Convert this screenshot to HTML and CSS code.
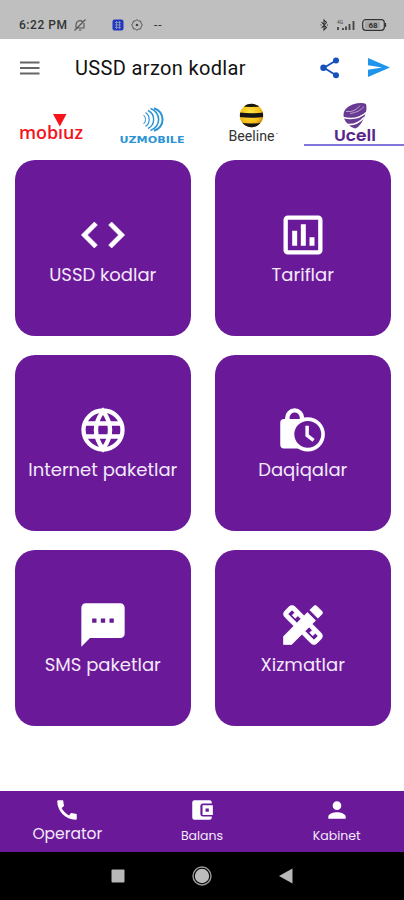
FILE: index.html
```
<!DOCTYPE html>
<html lang="uz">
<head>
    <meta charset="UTF-8">
    <meta name="viewport" content="width=device-width, initial-scale=1.0">
    <title>USSD arzon kodlar</title>
    <link rel="stylesheet" href="styles.css">
</head>
<body>
    <div class="status-bar">
        <span class="time">6:22 PM</span>
        <svg class="muted" width="14" height="14" viewBox="0 0 14 14">
            <path d="M3 10V6.500a4 4 0 0 1 6.500-3M11 5v5H4.500M6 12h2.500M1.500 12.500l11-11" fill="none" stroke="#555" stroke-width="1.100"/>
        </svg>
        <svg class="app-dot" width="12" height="12" viewBox="0 0 12 12">
            <rect x="0.500" y="0.500" width="11" height="11" rx="2" fill="#2038c0"/>
            <path d="M3 3.500h6M3 6h6M3 8.500h6M4.500 2v8M7.500 2v8" stroke="#8b93b8" stroke-width="0.900"/>
        </svg>
        <svg class="gear" width="12" height="12" viewBox="0 0 12 12">
            <path d="M6 .7l1.600 1.200 2 .2.500 2L11.300 6l-1.200 1.900-.5 2-2 .2L6 11.300l-1.600-1.200-2-.2-.5-2L.7 6l1.200-1.900.5-2 2-.2z" fill="none" stroke="#555"/>
            <circle cx="6" cy="6" r="1.300" fill="#444"/>
        </svg>
        <span class="more-dots">--</span>
        <svg class="status-right" width="69" height="14" viewBox="0 0 69 14">
            <path d="M1.500 4l5 5.500L4 12V2l2.500 2.500-5 5.500M.5 7h1M7 7h1" fill="none" stroke="#333" stroke-width="1.100"/>
            <text x="17" y="5.500" font-size="5" fill="#444">4G</text>
            <path d="M18 12V9M23 12v-2M26 12V8.500M29.500 12V6M33.500 12V3" stroke="#444" stroke-width="1.800"/>
            <rect x="42.700" y="1.700" width="21.600" height="10.600" rx="3" fill="none" stroke="#333" stroke-width="1.200"/>
            <path d="M65.500 5v4" stroke="#333" stroke-width="1.200"/>
            <rect x="45" y="3.500" width="15" height="7" rx="1" fill="#a5a5a5"/>
            <text x="48.500" y="10" font-size="8" font-weight="bold" fill="#333">68</text>
        </svg>
    </div>

    <header>
        <svg class="menu-icon" width="20" height="14" viewBox="0 0 20 14">
            <path d="M0 1.500h19.500M0 7h19.500M0 12.500h19.500" stroke="#666" stroke-width="1.800"/>
        </svg>
        <h1>USSD arzon kodlar</h1>
        <svg class="share-icon" width="20" height="22" viewBox="0 0 20 22">
            <path d="M16 3.500L4 10.700l12 7.500" fill="none" stroke="#1550bd" stroke-width="1.800"/>
            <circle cx="16" cy="3.500" r="3" fill="#1550bd"/>
            <circle cx="3.500" cy="10.700" r="3.200" fill="#1550bd"/>
            <circle cx="16" cy="18.200" r="3" fill="#1550bd"/>
        </svg>
        <svg class="send-icon" width="22" height="19" viewBox="0 0 22 19">
            <path d="M0 0l22 9.500L0 19v-7.300l14-2.200L0 7.300z" fill="#1e94ea"/>
        </svg>
    </header>

    <nav class="operators">
        <a class="tab">
            <svg width="100" height="47" viewBox="0 0 100 47">
                <path d="M53 14h13.500l-6.700 12.500z" fill="#f5141c"/>
                <text class="logo-mobiuz" x="19" y="39" textLength="64" lengthAdjust="spacingAndGlyphs">mobıuz</text>
            </svg>
        </a>
        <a class="tab">
            <svg width="100" height="47" viewBox="0 0 100 47">
                <g fill="none" stroke="#2b94d3">
                    <path d="M53 8.300a11.600 11.600 0 0 1 0 22.400" stroke-width="2"/>
                    <path d="M49.500 8.500a11.500 11.500 0 0 1 0 22" stroke-width="1.600"/>
                    <path d="M47 10.500a10 10 0 0 1 0 18" stroke-width="1.400"/>
                    <path d="M44.500 12.500a8.500 8.500 0 0 1 0 14" stroke-width="1.200"/>
                    <path d="M42.500 15a6 6 0 0 1 0 9" stroke-width="1"/>
                </g>
                <text class="logo-uzmobile" x="18.500" y="43" textLength="65" lengthAdjust="spacingAndGlyphs">UZMOBILE</text>
            </svg>
        </a>
        <a class="tab">
            <svg width="100" height="47" viewBox="0 0 100 47">
                <defs>
                    <radialGradient id="bee" cx="45%" cy="40%" r="60%">
                        <stop offset="0" stop-color="#ffe74a"/>
                        <stop offset="0.700" stop-color="#f8bd16"/>
                        <stop offset="1" stop-color="#b97b08"/>
                    </radialGradient>
                    <clipPath id="ball"><circle cx="50" cy="15.500" r="11.700"/></clipPath>
                </defs>
                <g transform="translate(-1.500)" clip-path="url(#ball)">
                    <rect x="38" y="3" width="24" height="25" fill="url(#bee)"/>
                    <path d="M38 3h24v3q-12 2-24 0zM38 12.500q12 1.500 24 0v4.500q-12 1.500-24 0zM38 22.500q12 2 24 0v6H38z" fill="#151515"/>
                </g>
                <text class="logo-beeline" x="25.500" y="41" textLength="46" lengthAdjust="spacingAndGlyphs">Beeline</text>
                <circle cx="74" cy="33.500" r="0.700" fill="#888"/>
            </svg>
        </a>
        <a class="tab active">
            <svg width="100" height="47" viewBox="0 0 100 47">
                <path d="M39.500 15q0-7 9-10.500 9-2.500 13.500-.5 1.500 6-1.500 12.500Q57 26 51.500 28.500q-5-1-8.500-5.500-3.500-3.500-3.500-8z" fill="#693a92"/>
                <path d="M39 17.500q14 3.500 24-5.500M43 24.500q10 1 17-7" fill="none" stroke="#fff" stroke-width="1.600"/>
                <path d="M42 11.500q9 1 14-6M46 13.500q9-1 14-7" fill="none" stroke="#c4a9d5" stroke-width="0.900"/>
                <text class="logo-ucell" x="30" y="41" textLength="42" lengthAdjust="spacingAndGlyphs">Ucell</text>
            </svg>
        </a>
    </nav>

    <main>
        <a class="card">
            <svg class="icon" viewBox="0 0 24 24"><path stroke="#fff" stroke-width="0.300" d="M9.400 16.600L4.800 12l4.600-4.600L8 6l-6 6 6 6 1.400-1.400zm5.200 0l4.600-4.600-4.600-4.600L16 6l6 6-6 6-1.400-1.400z"/></svg>
            <span>USSD kodlar</span>
        </a>
        <a class="card">
            <svg class="icon" viewBox="0 0 24 24"><path d="M19 3H5c-1.100 0-2 .9-2 2v14c0 1.100.9 2 2 2h14c1.100 0 2-.9 2-2V5c0-1.100-.9-2-2-2zm0 16H5V5h14v14zM7 10h2.300v7H7zm4-3h2.300v10H11zm4 6h2.300v4H15z"/></svg>
            <span>Tariflar</span>
        </a>
        <a class="card">
            <svg class="icon" viewBox="0 0 24 24"><g fill="none" stroke="#fff" stroke-width="2"><circle cx="12" cy="12" r="9"/><path d="M12 3.200Q5.500 12 12 20.800Q18.500 12 12 3.200zM3.500 9h17M3.500 15h17"/></g></svg>
            <span>Internet paketlar</span>
        </a>
        <a class="card">
            <svg class="icon" viewBox="0 0 24 24">
                <path d="M3.200 6.900h.5V6.500a4.450 4.500 0 0 1 8.900 0L14 9v11.500H3.200a1.700 1.700 0 0 1-1.700-1.700V8.600a1.700 1.700 0 0 1 1.700-1.700z"/>
                <path class="hole" d="M5.800 6.900V6.300a2.350 2.350 0 0 1 4.700 0v.6z"/>
                <circle cx="14.200" cy="14" r="7.900"/>
                <circle class="hole" cx="14.200" cy="14" r="6.200"/>
                <path d="M13.900 10v4.500l3 2.300" fill="none" stroke="#fff" stroke-width="1.600"/>
            </svg>
            <span>Daqiqalar</span>
        </a>
        <a class="card">
            <svg class="icon" viewBox="0 0 24 24"><path d="M20 2H4c-1.100 0-1.990.9-1.990 2L2 22l4-4h14c1.100 0 2-.9 2-2V4c0-1.100-.9-2-2-2zM9 11H7V9h2v2zm4 0h-2V9h2v2zm4 0h-2V9h2v2z"/></svg>
            <span>SMS paketlar</span>
        </a>
        <a class="card">
            <svg class="icon" viewBox="0 0 24 24"><path d="M16.240 11.510l1.570-1.570-3.750-3.750-1.570 1.570-4.140-4.130c-.78-.78-2.050-.78-2.830 0l-1.900 1.900c-.78.78-.78 2.050 0 2.830l4.130 4.130L3 17.250V21h3.750l4.760-4.760 4.130 4.130c.95.95 2.230.6 2.830 0l1.900-1.900c.78-.78.78-2.050 0-2.830l-4.130-4.130zm-7.060-.44L5.040 6.940l1.890-1.900L8.200 6.310 7.020 7.500l1.410 1.410 1.190-1.190 1.450 1.450-1.890 1.900zm7.880 7.890l-4.130-4.130 1.900-1.900 1.450 1.450-1.190 1.190 1.410 1.410 1.190-1.190 1.270 1.270-1.900 1.900zM20.710 7.040c.39-.39.39-1.020 0-1.410l-2.340-2.340c-.47-.47-1.120-.29-1.410 0l-1.830 1.830 3.750 3.750 1.830-1.830z" stroke="#fff" stroke-width="0.300"/></svg>
            <span>Xizmatlar</span>
        </a>
    </main>

    <nav class="bottom-nav">
        <a class="item selected">
            <svg viewBox="0 0 24 24"><path d="M20.010 15.380c-1.230 0-2.420-.2-3.530-.56-.35-.12-.74-.03-1.010.24l-1.570 1.970c-2.830-1.350-5.480-3.900-6.890-6.830l1.950-1.660c.27-.28.35-.67.24-1.020-.37-1.110-.56-2.300-.56-3.530 0-.54-.45-.99-.99-.99H4.190C3.650 3 3 3.240 3 3.990 3 13.280 10.730 21 20.010 21c.71 0 .99-.63.99-1.180v-3.450c0-.54-.45-.99-.99-.99z"/></svg>
            <span>Operator</span>
        </a>
        <a class="item">
            <svg viewBox="0 0 24 24"><path d="M5 3h14a2 2 0 0 1 2 2v1h-8a2.500 2.500 0 0 0-2.500 2.500v7A2.500 2.500 0 0 0 13 18h8v1a2 2 0 0 1-2 2H5a2 2 0 0 1-2-2V5a2 2 0 0 1 2-2zM12.500 7.500H22v9h-9.500zm2.800 3v3h3v-3z" fill-rule="evenodd"/></svg>
            <span>Balans</span>
        </a>
        <a class="item">
            <svg viewBox="0 0 24 24"><path d="M12 12c2.210 0 4-1.790 4-4s-1.790-4-4-4-4 1.790-4 4 1.790 4 4 4zm0 2c-2.670 0-8 1.340-8 4v2h16v-2c0-2.660-5.330-4-8-4z"/></svg>
            <span>Kabinet</span>
        </a>
    </nav>

    <div class="system-nav">
        <svg width="14" height="14" viewBox="0 0 14 14"><rect x="0.500" y="0.500" width="13" height="13" rx="1" fill="#b8b8b8"/></svg>
        <svg width="20" height="20" viewBox="0 0 20 20"><circle cx="10" cy="10" r="9" fill="none" stroke="#999" stroke-width="1.400"/><circle cx="10" cy="10" r="7.200" fill="#bcbcbc"/></svg>
        <svg width="14" height="16" viewBox="0 0 14 16"><path d="M0 8L13.500.5v15z" fill="#b8b8b8"/></svg>
    </div>
</body>
</html>
```

FILE: styles.css
```
* {
    box-sizing: border-box;
}

body {
    margin: 0;
    width: 404px;
    height: 900px;
    display: flex;
    flex-direction: column;
    overflow: hidden;
    background-color: #fff;
    font-family: Poppins, Inter, sans-serif;
}

svg {
    display: block;
    flex-shrink: 0;
}

/* phone status bar */
.status-bar {
    height: 39px;
    padding: 10px 15px 0 19px;
    display: flex;
    align-items: center;
    background-color: #bfbfbf;
    color: #333;
    font-family: Roboto, sans-serif;
}

.time {
    width: 49px;
    font-size: 12px;
    font-weight: 500;
    letter-spacing: 0.55px;
    white-space: nowrap;
}

.muted {
    margin-left: 5px;
}

.app-dot {
    margin-left: 25px;
}

.gear {
    margin-left: 7px;
}

.more-dots {
    margin-left: 11px;
    font-size: 12px;
    letter-spacing: 1px;
}

.status-right {
    margin-left: auto;
}

/* app bar */
header {
    height: 61px;
    padding: 0 14px 4px 20px;
    display: flex;
    align-items: center;
}

header h1 {
    margin: 0 auto 0 35px;
    font-family: Roboto, sans-serif;
    font-size: 20px;
    font-weight: 400;
    letter-spacing: 0.35px;
    color: #111;
    white-space: nowrap;
}

.send-icon {
    margin-left: 28px;
}

/* operator tabs */
.operators {
    height: 47px;
    display: grid;
    grid-template-columns: repeat(4, 100px);
    column-gap: 1.3px;
}

.tab.active {
    height: 46px;
    border-bottom: 2px solid #8276dc;
    overflow: hidden;
}

.logo-mobiuz {
    font: 600 18px "Open Sans", sans-serif;
    fill: #f5141c;
}

.logo-uzmobile {
    font: 700 9px "DejaVu Sans", sans-serif;
    fill: #2b94d3;
}

.logo-beeline {
    font: 400 15px Roboto, sans-serif;
    fill: #333;
}

.logo-ucell {
    font: 600 16.5px Poppins, Inter, sans-serif;
    fill: #59248b;
}

/* cards */
main {
    flex: 1;
    padding: 13px 14px 0 15px;
    display: grid;
    grid-template-columns: 175.5px 175.5px;
    grid-auto-rows: 176px;
    gap: 19px 24.5px;
}

.card {
    padding-top: 49px;
    display: flex;
    flex-direction: column;
    align-items: center;
    border-radius: 20px;
    background-color: #6a1a99;
    color: #f4e9fa;
    font-size: 18px;
    line-height: 27px;
    white-space: nowrap;
}

.icon {
    width: 52px;
    height: 52px;
    fill: #fff;
}

.hole {
    fill: #6a1a99;
}

/* bottom menu */
.bottom-nav {
    height: 61px;
    padding-top: 6px;
    display: grid;
    grid-template-columns: repeat(3, 1fr);
    background-color: #6a1a99;
    color: #f4e9fa;
}

.item {
    display: flex;
    flex-direction: column;
    align-items: center;
    font-size: 12.5px;
    line-height: 25px;
}

.item svg {
    width: 26px;
    height: 26px;
    fill: #fff;
}

.item.selected {
    font-size: 15.5px;
    line-height: 22px;
}

/* android buttons */
.system-nav {
    height: 48px;
    display: flex;
    align-items: center;
    justify-content: center;
    gap: 67px;
    background-color: #000;
}
```
